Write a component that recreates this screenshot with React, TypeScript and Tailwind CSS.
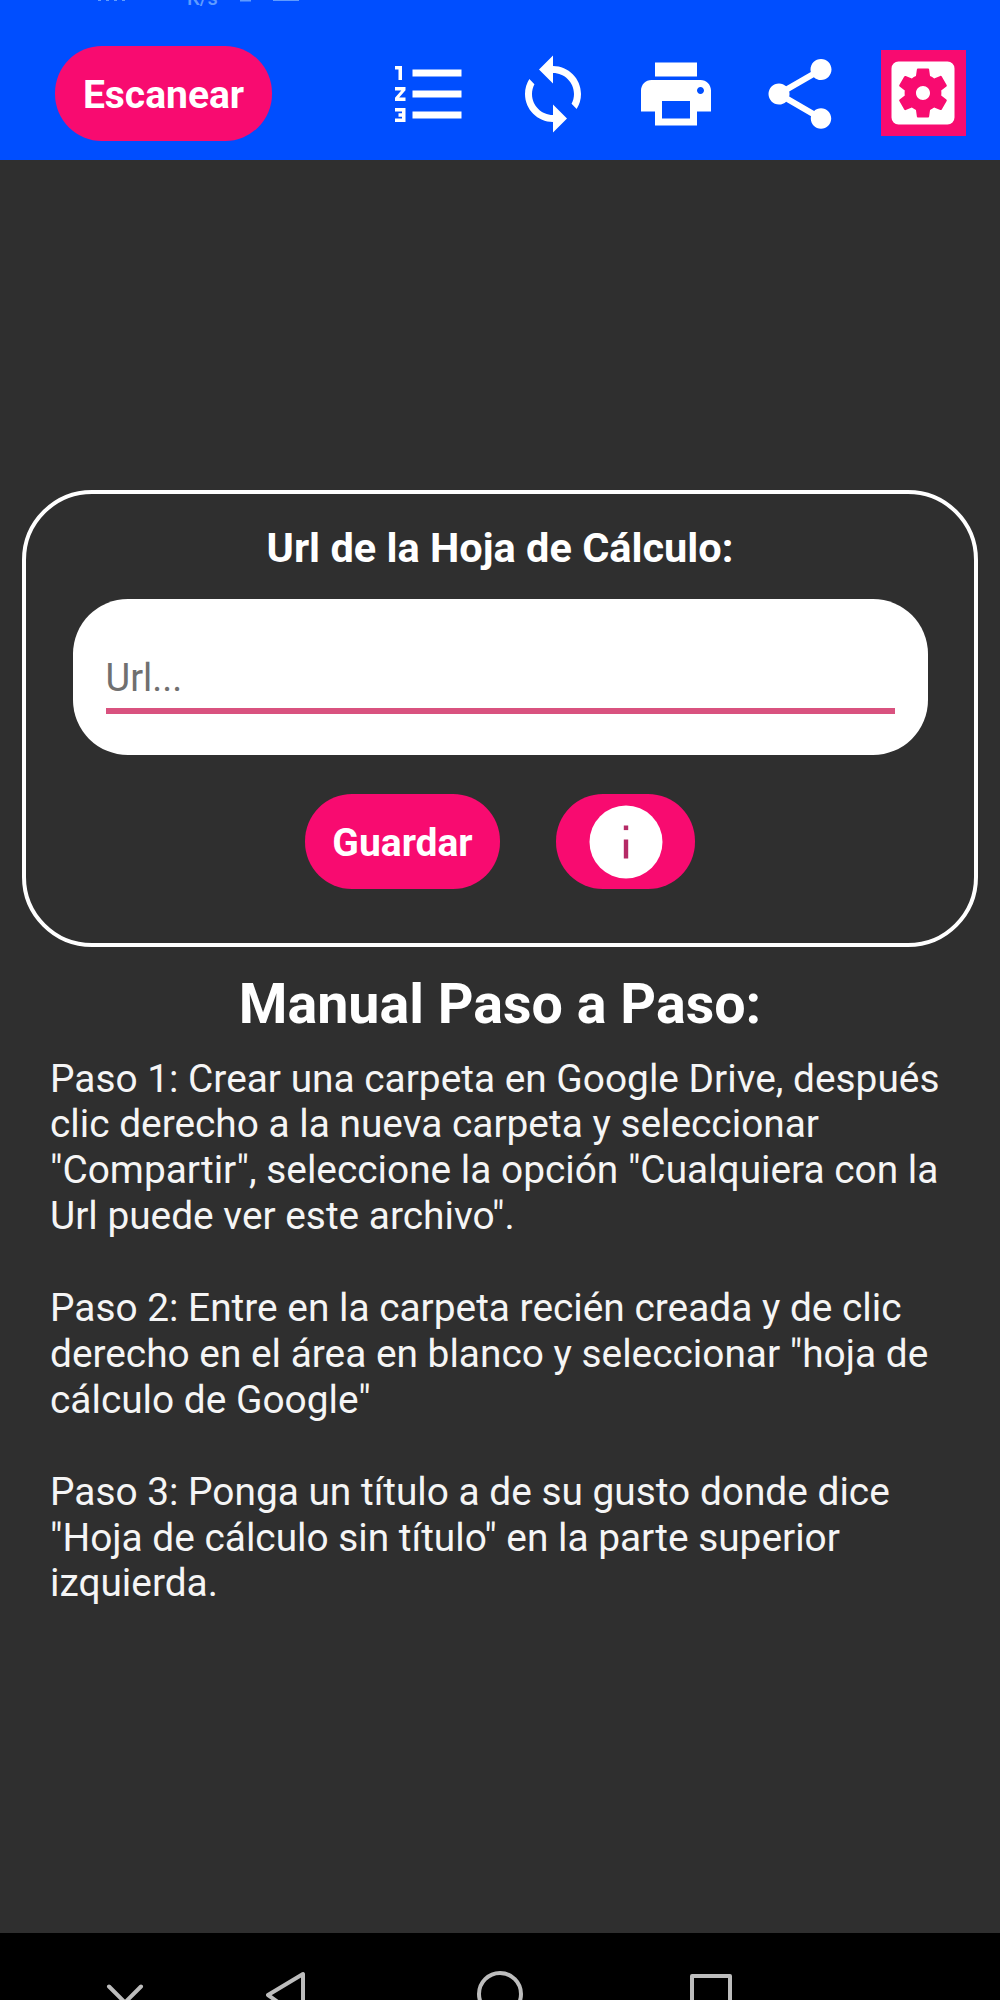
import { MdFormatListNumbered, MdPrint, MdSettingsApplications, MdShare, MdSync } from "react-icons/md";

const steps = [
  [
    "Paso 1: Crear una carpeta en Google Drive, después",
    "clic derecho a la nueva carpeta y seleccionar",
    "\"Compartir\", seleccione la opción \"Cualquiera con la",
    "Url puede ver este archivo\".",
  ],
  [
    "Paso 2: Entre en la carpeta recién creada y de clic",
    "derecho en el área en blanco y seleccionar \"hoja de",
    "cálculo de Google\"",
  ],
  [
    "Paso 3: Ponga un título a de su gusto donde dice",
    "\"Hoja de cálculo sin título\" en la parte superior",
    "izquierda.",
  ],
];

function InfoIcon() {
  return (
    <svg viewBox="0 0 74 74" className="w-[74px] h-[74px]">
      <circle cx="37" cy="37" r="36.5" fill="white" />
      <rect x="34.8" y="20.5" width="4.4" height="4.6" fill="#b52a66" />
      <rect x="34.8" y="34.5" width="4.4" height="19" fill="#b52a66" />
    </svg>
  );
}

function StatusBar() {
  return (
    <svg viewBox="0 0 1000 8" className="block w-full h-2 overflow-hidden" fill="#5f9bff">
      <path d="M98 0h3v1h-3zM106 0h3v1h-3zM114 0h3v1h-3zM122 0h3v1h-3zM240 0h11v1.5h-11zM273 0h26v1h-26z" />
      <text x="187" y="5" fontSize="20" fontWeight="500" fontFamily="Roboto, sans-serif">K/s</text>
    </svg>
  );
}

function NavBar() {
  return (
    <div className="h-[67px] bg-black overflow-hidden">
      <svg viewBox="0 0 1000 67" className="w-full h-[67px]" fill="none" stroke="#bdbdbd" strokeWidth="4" strokeLinecap="round" strokeLinejoin="round">
        <path d="M109 53.5l16 16 16-16" />
        <path d="M303 41v46l-35-25z" />
        <circle cx="500" cy="61" r="21" />
        <rect x="692" y="43" width="38" height="40" />
      </svg>
    </div>
  );
}

export default function App() {
  return (
    <div className="w-[1000px] h-[2000px] bg-[#2f2f2f] flex flex-col overflow-hidden font-['Roboto',sans-serif] text-white">
      <header className="h-[160px] bg-[#004eff] shrink-0">
        <StatusBar />
        <div className="flex pt-[38px] pl-[55px]">
          <button className="w-[217px] h-[95px] rounded-[47px] bg-[#f80b70] text-[39px] font-bold pt-1">
            Escanear
          </button>
          <div className="flex gap-[39.2px] ml-[116px] pt-1">
            <MdFormatListNumbered className="w-[84px] h-[84px] mt-[1.5px]" />
            <MdSync className="w-[84px] h-[84px] mt-[1.5px]" />
            <MdPrint className="w-[84px] h-[84px] mt-[1.5px]" />
            <MdShare className="w-[84px] h-[84px] mt-[1.5px]" />
            <div className="w-[85px] h-[86px] bg-[#f80b70] flex items-center justify-center">
              <MdSettingsApplications className="w-[84px] h-[84px]" />
            </div>
          </div>
        </div>
      </header>

      <main className="flex-1 pt-[330px]">
        <section className="mx-[22px] h-[457px] border-4 border-white rounded-[70px] flex flex-col items-center">
          <h2 className="text-[41.5px] leading-[48px] font-bold mt-[30px]">Url de la Hoja de Cálculo:</h2>
          <div className="mt-[27px] w-[855px] h-[156px] rounded-[55px] bg-white px-[33px] pt-[56px]">
            <input
              type="text"
              placeholder="Url..."
              className="block w-full h-[59px] pb-2 border-b-[6px] border-[#d9527f] text-[38px] text-gray-800 placeholder:text-[#707070] outline-none"
            />
          </div>
          <div className="flex gap-[56px] mt-[39px]">
            <button className="w-[195px] h-[95px] rounded-[47px] bg-[#f80b70] text-[39px] font-bold pt-1">
              Guardar
            </button>
            <button className="w-[139px] h-[95px] rounded-[47px] bg-[#f80b70] flex items-center justify-center">
              <InfoIcon />
            </button>
          </div>
        </section>

        <h1 className="text-center text-[55.6px] leading-[66px] font-bold mt-[24px]">Manual Paso a Paso:</h1>
        <div className="pl-[50px] mt-[18.5px] text-[38.85px] leading-[45.9px] text-[#f5f5f5]">
          {steps.map((lines) => (
            <p key={lines[0]} className="mb-[45.9px]">
              {lines.map((line) => (
                <span key={line} className="block whitespace-nowrap">{line}</span>
              ))}
            </p>
          ))}
        </div>
      </main>

      <NavBar />
    </div>
  );
}
